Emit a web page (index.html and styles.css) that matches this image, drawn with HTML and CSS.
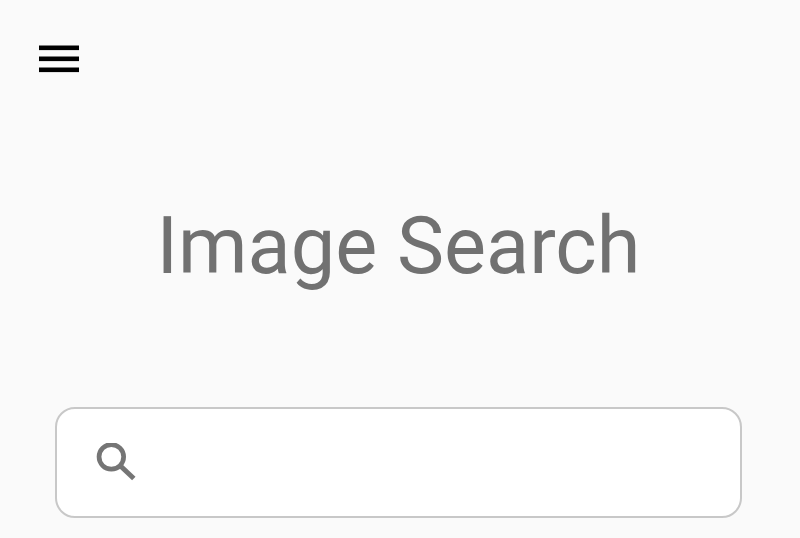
FILE: index.html
```html
<!DOCTYPE html>
<html lang="en">
<head>
<meta charset="utf-8">
<title>Image Search</title>
<link rel="stylesheet" href="styles.css">
</head>
<body>
<div class="page">
  <header class="topbar">
    <button class="menu" aria-label="Menu">
      <svg class="menu-icon" viewBox="0 0 40 28" width="40" height="28" aria-hidden="true">
        <rect x="0" y="0.5" width="40" height="4.6" fill="#000"/>
        <rect x="0" y="11.5" width="40" height="4.6" fill="#000"/>
        <rect x="0" y="22.5" width="40" height="4.6" fill="#000"/>
      </svg>
    </button>
  </header>
  <h1 class="title">Image Search</h1>
  <div class="search">
    <svg class="icon" viewBox="0 0 42 40" width="42" height="40" aria-hidden="true">
      <circle cx="16.35" cy="13.85" r="12.3" fill="none" stroke="#757575" stroke-width="4.7"/>
      <path d="M25 22.5 L38.8 35.5" fill="none" stroke="#757575" stroke-width="5"/>
    </svg>
  </div>
</div>
</body>
</html>
```

FILE: styles.css
```css
html, body {
  margin: 0;
  padding: 0;
  height: 100%;
  overflow: hidden;
}
body {
  background: #fafafa;
  font-family: Roboto, "Liberation Sans", sans-serif;
}
.page {
  display: flex;
  flex-direction: column;
  height: 538px;
}
.topbar {
  padding: 45px 0 0 39px;
}
.menu {
  display: block;
  width: 40px;
  height: 28px;
  padding: 0;
  border: 0;
  background: none;
}
.menu-icon {
  display: block;
}
.title {
  margin: 126px 0 0;
  padding-right: 3px;
  font-size: 79.3px;
  font-weight: 400;
  line-height: 94px;
  text-align: center;
  color: #717171;
}
.search {
  display: flex;
  align-items: center;
  box-sizing: border-box;
  width: 687px;
  height: 111px;
  margin: 114px 0 0 54.5px;
  padding-left: 38px;
  background: #fff;
  border: 2px solid #c8c8c8;
  border-radius: 20px;
}
```
